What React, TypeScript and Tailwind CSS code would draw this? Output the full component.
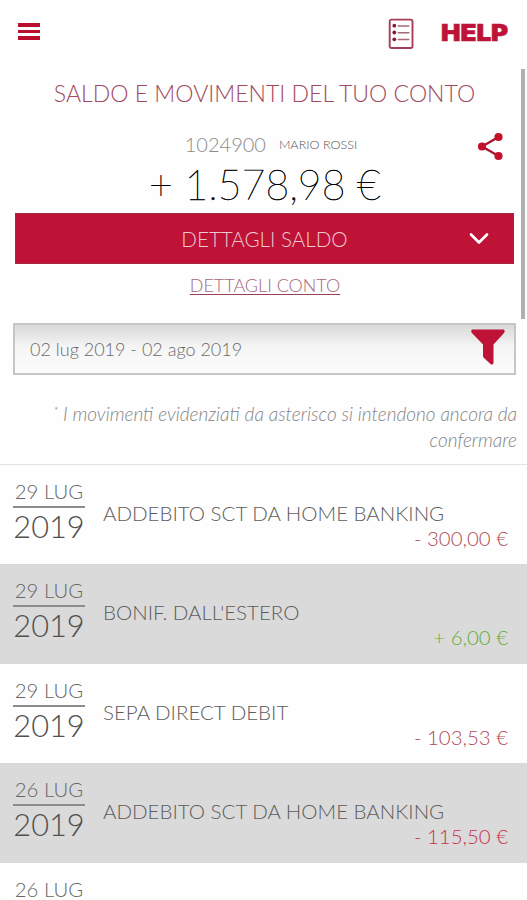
import React from 'react';

interface Movement {
  day: string;
  year: string;
  label: string;
  amount: string;
  color: string;
}

const movements: Movement[] = [
  { day: '29 LUG', year: '2019', label: 'ADDEBITO SCT DA HOME BANKING', amount: '- 300,00 €', color: 'text-[#b04c58]' },
  { day: '29 LUG', year: '2019', label: "BONIF. DALL'ESTERO", amount: '+ 6,00 €', color: 'text-[#62ae3c]' },
  { day: '29 LUG', year: '2019', label: 'SEPA DIRECT DEBIT', amount: '- 103,53 €', color: 'text-[#b04c58]' },
  { day: '26 LUG', year: '2019', label: 'ADDEBITO SCT DA HOME BANKING', amount: '- 115,50 €', color: 'text-[#c8334a]' },
];

function Header() {
  return (
    <header className="flex h-[69px] shrink-0 items-start justify-between pl-[18px] pr-[19px]">
      <button className="mt-[23px] flex flex-col gap-[3px]" aria-label="Menu">
        <span className="h-[3.5px] w-[21.5px] bg-[#b90f2b]" />
        <span className="h-[3.5px] w-[21.5px] bg-[#b90f2b]" />
        <span className="h-[3.5px] w-[21.5px] bg-[#b90f2b]" />
      </button>
      <div className="flex items-start">
        <svg className="mt-[18px] mr-[27px] h-[32px] w-[26px]" viewBox="0 0 26 32" fill="none">
          <rect x="1.7" y="1.6" width="22.8" height="28.4" rx="1.8" stroke="#a53e56" strokeWidth="1.9" />
          <g fill="#8c1733">
            <circle cx="6.3" cy="7.7" r="1.9" />
            <circle cx="6.3" cy="14.5" r="1.9" />
            <circle cx="6.3" cy="21.3" r="1.9" />
          </g>
          <path d="M10.3 7.9h10.5M10.3 14.7h10.5M10.3 21.5h10.5" stroke="#a86a7a" strokeWidth="1.5" strokeLinecap="round" />
        </svg>
        <span className="mt-[21px] w-[67px] font-['Inter',sans-serif] text-[23px] leading-[24px] font-black text-[#be1237]">
          <span className="inline-block origin-left scale-x-[1.13] [-webkit-text-stroke:0.6px_#be1237]">HELP</span>
        </span>
      </div>
    </header>
  );
}

function Balance() {
  return (
    <section className="flex shrink-0 flex-col items-center">
      <h1 className="mt-[9px] pl-[2px] text-[23.05px] leading-[30px] whitespace-nowrap text-[#a04a60]">
        SALDO E MOVIMENTI DEL TUO CONTO
      </h1>
      <div className="mt-[22px] grid h-[32px] w-full grid-cols-[1fr_auto_1fr] items-center">
        <div className="col-start-2 -mt-[4px] flex items-center gap-[13px] pl-[15px] whitespace-nowrap text-[#8c8c8c]">
          <span className="text-[20px] leading-[32px]">1024900</span>
          <span className="pt-[2px] text-[12.6px] text-[#555]">MARIO ROSSI</span>
        </div>
        <svg className="mr-[22px] h-[30px] w-[28px] justify-self-end" viewBox="0 0 28 30">
          <path d="M21.5 6L5 15.5l16.5 9.5" fill="none" stroke="#a80f2c" strokeWidth="2.2" />
          <g fill="#c4102b">
            <circle cx="21.5" cy="6" r="4.1" />
            <circle cx="5" cy="15.5" r="4.1" />
            <circle cx="21.5" cy="25" r="4.1" />
          </g>
        </svg>
      </div>
      <p className="h-[51px] pl-[3px] text-[41px] leading-[46px] font-thin whitespace-nowrap text-black [-webkit-text-stroke:0.5px_black]">
        + 1.578,98 €
      </p>
      <button className="ml-[2px] grid h-[51px] w-[499px] grid-cols-[1fr_auto_1fr] items-center border border-[#a92642] bg-[#be1237] text-[#f0c8d1]">
        <span className="col-start-2 text-[20.6px] leading-[30px]">DETTAGLI SALDO</span>
        <svg className="mr-[24px] h-[14px] w-[20px] justify-self-end" viewBox="0 0 20 14">
          <path d="M2 2.5l8 8 8-8" fill="none" stroke="#fff" strokeWidth="2.7" strokeLinecap="round" strokeLinejoin="round" />
        </svg>
      </button>
      <a href="#" className="mt-[9px] ml-[3px] text-[17.95px] leading-[24px] whitespace-nowrap text-[#a5677a] underline decoration-[#9a3f58] decoration-1 underline-offset-2">
        DETTAGLI CONTO
      </a>
    </section>
  );
}

function Filter() {
  return (
    <div className="ml-[13px] mt-[26px] flex h-[52px] w-[503px] shrink-0 items-center justify-between border-2 border-[#c6c6c6] bg-linear-to-b from-[#d9d9d9] via-[#f5f5f5] via-45% to-[#fcfcfc] pr-[8px] pl-[15px]">
      <span className="-mt-[1px] text-[18px] leading-[24px] whitespace-nowrap text-[#6a6a6a]">02 lug 2019 - 02 ago 2019</span>
      <svg className="-mt-[4px] h-[37px] w-[36px]" viewBox="0 0 36 37" fill="#be1237">
        <path d="M2 0.5h32q1.5 1.5 0 3.5L23.5 15.5V34q-.5 2-2.5 1.500l-7-6.500q-1-1-1-2V15.500L1.500 3.500Q.5 2 2 .5z" />
      </svg>
    </div>
  );
}

function MovementRow({ item, shaded }: { item: Movement; shaded: boolean }) {
  return (
    <li className={`flex h-[99.4px] shrink-0 pl-[13px] pr-[19px] ${shaded ? 'bg-[#dadada]' : 'bg-[#fefefe]'}`}>
      <div className="w-[72px] shrink-0 pt-[13px] text-center whitespace-nowrap">
        <div className="h-[30px] border-b-2 border-[#8c8c8c] text-[20.3px] leading-[27px] text-[#666]">{item.day}</div>
        <div className="text-[30.8px] leading-[37px] text-[#505050]">{item.year}</div>
      </div>
      <div className="flex flex-1 flex-col pt-[35px] pl-[18px]">
        <span className="h-[25px] text-[20.5px] leading-[27px] whitespace-nowrap text-[#5c5c5c]">{item.label}</span>
        <span className={`self-end text-[20.4px] leading-[27px] whitespace-nowrap ${item.color}`}>{item.amount}</span>
      </div>
    </li>
  );
}

function App() {
  return (
    <div className="relative flex h-[900px] w-[527px] flex-col overflow-hidden bg-[#fefefe] font-['Lato',sans-serif] font-light">
      <Header />
      <Balance />
      <Filter />
      <p className="mt-[26px] shrink-0 pr-[10px] text-right text-[19px] leading-[26px] text-[#858585] italic">
        <span className="inline-block whitespace-nowrap">
          <sup className="text-[12px]">*</sup> I movimenti evidenziati da asterisco si intendono ancora da
        </span>
        <br />
        confermare
      </p>
      <ul className="mt-[11px] flex shrink-0 flex-col">
        <li className="-mb-[1px] h-[2px] shrink-0 bg-[#e2e2e2]" />
        {movements.map((item, i) => (
          <MovementRow key={i} item={item} shaded={i % 2 === 1} />
        ))}
        <li className="flex h-[40px] shrink-0 pl-[13px]">
          <div className="w-[72px] pt-[13px] text-center text-[20.3px] leading-[27px] whitespace-nowrap text-[#666]">26 LUG</div>
        </li>
      </ul>
      {/* scroll thumb */}
      <div className="absolute top-[69px] right-[2px] h-[250px] w-[4px] bg-[#b0b0b0]" />
    </div>
  );
}

export default App;
